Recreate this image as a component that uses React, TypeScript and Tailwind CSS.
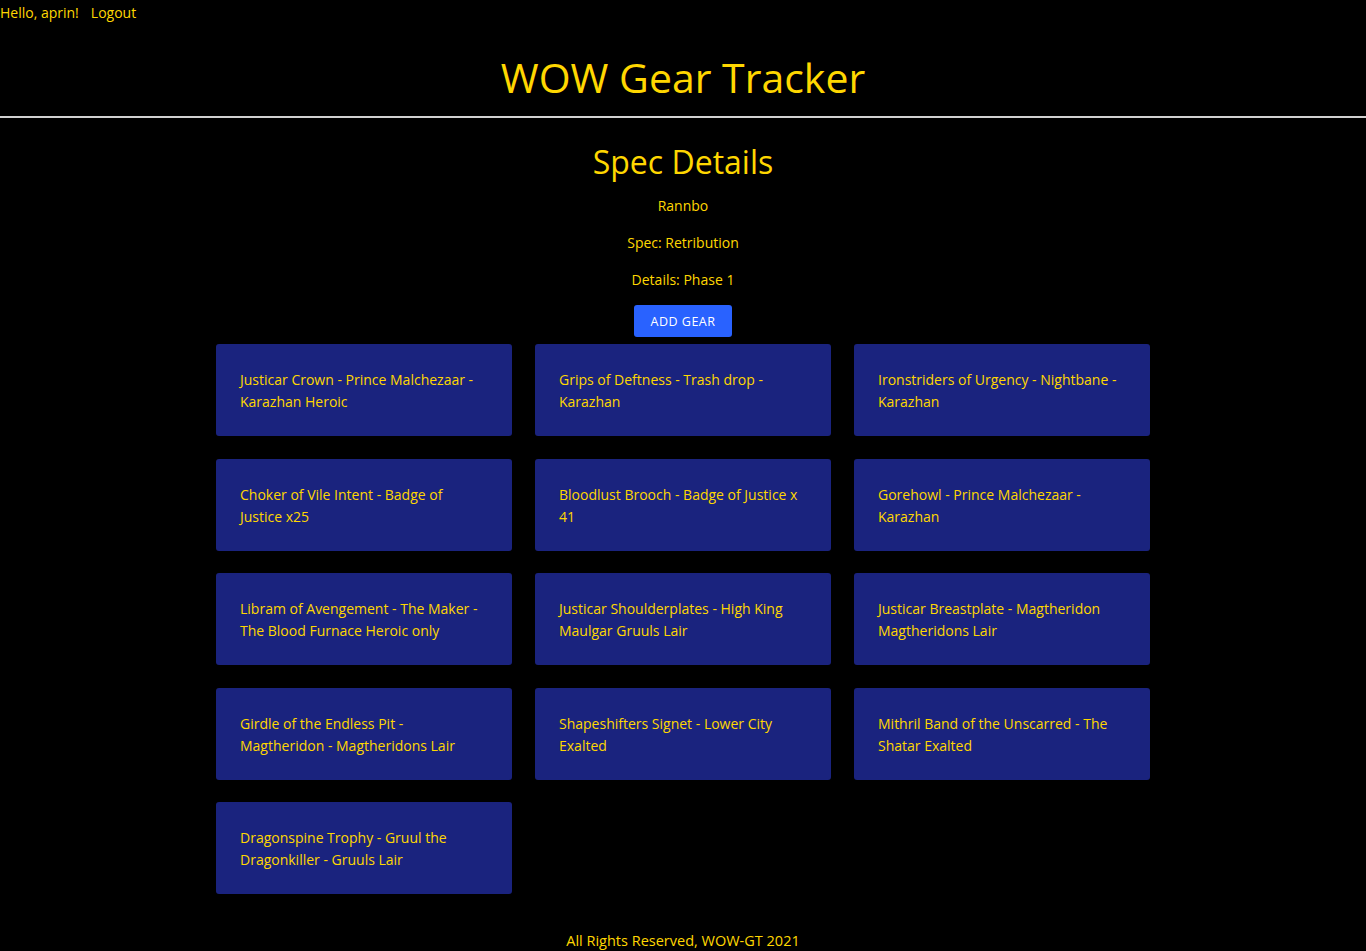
import React from "react";

const gear = [
  "Justicar Crown - Prince Malchezaar - Karazhan Heroic",
  "Grips of Deftness - Trash drop - Karazhan",
  "Ironstriders of Urgency - Nightbane - Karazhan",
  "Choker of Vile Intent - Badge of Justice x25",
  "Bloodlust Brooch - Badge of Justice x 41",
  "Gorehowl - Prince Malchezaar - Karazhan",
  "Libram of Avengement - The Maker - The Blood Furnace Heroic only",
  "Justicar Shoulderplates - High King Maulgar Gruuls Lair",
  "Justicar Breastplate - Magtheridon Magtheridons Lair",
  "Girdle of the Endless Pit - Magtheridon - Magtheridons Lair",
  "Shapeshifters Signet - Lower City Exalted",
  "Mithril Band of the Unscarred - The Shatar Exalted",
  "Dragonspine Trophy - Gruul the Dragonkiller - Gruuls Lair",
];

export default function App() {
  return (
    <div
      className="min-h-[951px] bg-black text-[#ffd700]"
      style={{ fontFamily: "'Open Sans', 'Noto Sans', sans-serif" }}
    >
      <div className="flex h-[22px] items-center gap-3 pt-[3px] text-[14px] leading-[22px]">
        <span>Hello, aprin!</span>
        <span>Logout</span>
      </div>
      <h1 className="mt-[23px] text-center text-[41px] leading-[64px]">WOW Gear Tracker</h1>
      <div className="mt-[7px] border-t-2 border-[#d0d0d0]" />
      <h2 className="mt-[20px] text-center text-[32px] leading-[48px]">Spec Details</h2>
      <div className="mt-[9px] flex flex-col items-center gap-[15px] text-[14px] leading-[22px]">
        <p>Rannbo</p>
        <p>Spec: Retribution</p>
        <p>Details: Phase 1</p>
        <button className="mt-[-1px] h-[32px] w-[98px] rounded-[3px] bg-[#2962ff] pt-[2px] text-[12.5px] tracking-[0.5px] text-white">
          ADD GEAR
        </button>
      </div>
      <div className="mx-auto mt-[7px] grid w-[934px] grid-cols-3 gap-x-[23px] gap-y-[22.5px]">
        {gear.map((g) => (
          <div
            key={g}
            className="flex h-[92px] items-center rounded-[3px] bg-[#1a237e] px-6 pt-[2px] text-[14px] leading-[22px]"
          >
            {g}
          </div>
        ))}
      </div>
      <footer className="mt-[36px] text-center text-[14.5px] leading-[22px]">
        All Rights Reserved, WOW-GT 2021
      </footer>
    </div>
  );
}
